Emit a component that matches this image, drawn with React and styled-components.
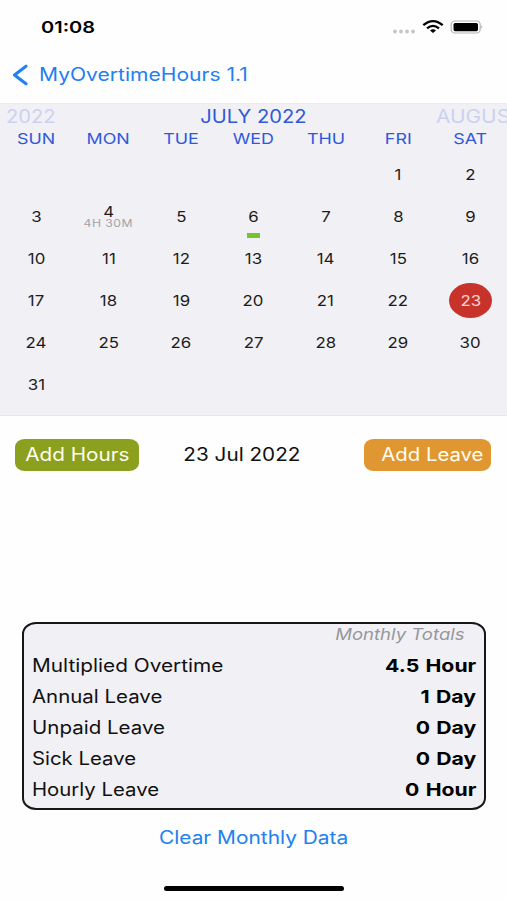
import styled, { createGlobalStyle } from "styled-components";

const GlobalStyle = createGlobalStyle`
  * {
    box-sizing: border-box;
  }
  body {
    margin: 0;
    background: #fefefe;
    font-family: Inter, "Liberation Sans", sans-serif;
    color: #111;
  }
  button {
    border: none;
    background: none;
    padding: 0;
    font-family: inherit;
  }
`;

const Screen = styled.div`
  width: 507px;
  height: 900px;
  display: flex;
  flex-direction: column;
  overflow: hidden;
`;

// extended lettering
const Wide = styled.span`
  display: inline-block;
  white-space: nowrap;
  transform: scaleX(${(props) => props.$stretch || 1.16});
  transform-origin: ${(props) => props.$origin || "center"};
`;

const StatusBar = styled.header`
  height: 54px;
  padding: 0 24px 0 41px;
  display: flex;
  align-items: center;
  justify-content: space-between;
`;

const Clock = styled.div`
  font-size: 16px;
  font-weight: 600;
  color: #000;
`;

const NavBar = styled.nav`
  height: 49px;
  padding: 0 0 8px 12px;
  display: flex;
  align-items: center;
`;

const BackButton = styled.button`
  display: flex;
  align-items: center;
  gap: 11px;
  font-size: 18px;
  line-height: 22px;
  color: #1f80f2;
`;

const Calendar = styled.section`
  height: 313px;
  background: #f1f0f5;
  border-top: 1px solid #ebeaef;
  border-bottom: 1px solid #e6e5ea;
`;

const Months = styled.div`
  height: 24px;
  display: grid;
  grid-template-columns: 130px 1fr 130px;
  align-items: center;
  font-size: 18px;
  color: #3059d8;
`;

const Month = styled.div`
  padding-left: ${(props) => props.$indent || 0}px;
  text-align: ${(props) => props.$align || "left"};
  color: ${(props) => (props.$faded ? "#cbd2f0" : "inherit")};
`;

const Week = styled.div`
  display: grid;
  grid-template-columns: repeat(7, 72.4px);
`;

const Weekday = styled.div`
  height: 22px;
  line-height: 22px;
  text-align: center;
  font-size: 15px;
  font-weight: 400;
  color: #2f59da;
`;

const Days = styled(Week)`
  padding-top: 3.4px;
  grid-auto-rows: 42.1px;
`;

const Day = styled.div`
  position: relative;
  display: flex;
  flex-direction: column;
  align-items: center;
  justify-content: center;
  font-size: 14.5px;
  line-height: 15px;
  font-weight: 400;
  color: ${(props) => (props.$selected ? "#fbd5d0" : "#1c1c20")};
`;

const DayCircle = styled.div`
  width: 43px;
  height: 35px;
  border-radius: 50%;
  background: #c7332b;
  display: flex;
  align-items: center;
  justify-content: center;
`;

const DayNote = styled.div`
  font-size: 10.5px;
  line-height: 10px;
  letter-spacing: 0.4px;
  color: #a3a3a8;
`;

const EventMark = styled.i`
  position: absolute;
  bottom: 0;
  width: 13px;
  height: 5px;
  background: #78c22c;
`;

const Actions = styled.div`
  height: 77px;
  padding: 0 16px 0 15px;
  display: grid;
  grid-template-columns: 124px 1fr 127px;
  align-items: center;
`;

const ActionButton = styled.button`
  height: 32px;
  border-radius: 10px / 8px;
  background: ${(props) => props.$color};
  color: #fffdf0;
  font-size: 18px;
  text-align: ${(props) => props.$align};
  padding-right: ${(props) => (props.$align === "right" ? 7.5 : 0)}px;
`;

const SelectedDate = styled.div`
  padding-right: 19px;
  text-align: center;
  font-size: 18px;
`;

const Totals = styled.section`
  width: 464px;
  height: 187.5px;
  margin: 129px 0 0 22px;
  padding: 0 8px;
  border: 2px solid #17171a;
  border-radius: 14px / 12px;
  background: #f1f0f5;
`;

const TotalsTitle = styled.h2`
  margin: 0;
  height: 26px;
  padding-right: 11px;
  text-align: right;
  font-size: 16px;
  line-height: 20px;
  font-weight: 400;
  font-style: italic;
  color: #97979c;
`;

const TotalsRow = styled.div`
  height: 31px;
  display: flex;
  justify-content: space-between;
  align-items: center;
  font-size: 18px;
`;

const Amount = styled.strong`
  font-weight: 700;
  word-spacing: 1px;
  color: #000;
`;

const ClearButton = styled.button`
  height: 24px;
  margin-top: 16.5px;
  font-size: 18px;
  line-height: 22px;
  color: #2280f0;
`;

const HomeIndicator = styled.div`
  width: 180px;
  height: 5px;
  margin: 36px 0 0 164px;
  border-radius: 3px;
  background: #000;
`;

const weekdays = ["SUN", "MON", "TUE", "WED", "THU", "FRI", "SAT"];
const leadingBlanks = 5;
const notes = { 4: "4H 30M" };
const marks = [6];
const selected = 23;

const totals = [
  { label: "Multiplied Overtime", amount: "4.5 Hour", stretch: 1.155 },
  { label: "Annual Leave", amount: "1 Day", stretch: 1.135 },
  { label: "Unpaid Leave", amount: "0 Day", stretch: 1.14 },
  { label: "Sick Leave", amount: "0 Day", stretch: 1.13 },
  { label: "Hourly Leave", amount: "0 Hour", stretch: 1.13 },
];

const StatusIcons = () => (
  <svg width="92" height="20" viewBox="0 0 92 20">
    <g fill="#c6c6c6">
      <circle cx="4" cy="14.5" r="1.9" />
      <circle cx="10" cy="14.5" r="1.9" />
      <circle cx="16" cy="14.5" r="1.9" />
      <circle cx="22" cy="14.5" r="1.9" />
    </g>
    <g fill="none" stroke="#000" strokeWidth="2.3">
      <path d="M32.3 8.2 Q42 0 51.7 8.2" />
      <path d="M36 11.4 Q42 6.4 48 11.4" />
    </g>
    <path d="M39 13.5 Q42 11.2 45 13.5 L42 16 Z" fill="#000" />
    <rect x="60.2" y="4" width="29" height="12" rx="3.6" fill="#fff" stroke="#b4b4b4" strokeWidth="1.2" />
    <rect x="62.5" y="6" width="24.5" height="8.2" rx="1.6" fill="#000" />
    <path d="M90.6 8 Q92 10 90.6 12 Z" fill="#777" />
  </svg>
);

const CalendarDay = ({ day }) => (
  <Day $selected={day === selected}>
    {day === selected ? (
      <DayCircle>
        <Wide>{day}</Wide>
      </DayCircle>
    ) : (
      <Wide>{day}</Wide>
    )}
    {notes[day] && (
      <DayNote>
        <Wide>{notes[day]}</Wide>
      </DayNote>
    )}
    {marks.includes(day) && <EventMark />}
  </Day>
);

const App = () => {
  return (
    <Screen>
      <GlobalStyle />
      <StatusBar>
        <Clock>
          <Wide $origin="left" $stretch={1.25}>
            01:08
          </Wide>
        </Clock>
        <StatusIcons />
      </StatusBar>
      <NavBar>
        <BackButton>
          <svg width="16" height="22" viewBox="0 0 16 22">
            <path d="M14 2.2 L2.5 11 L14 19.8" fill="none" stroke="#1f80f2" strokeWidth="3" strokeLinecap="round" strokeLinejoin="round" />
          </svg>
          <Wide $origin="left" $stretch={1.17}>
            MyOvertimeHours 1.1
          </Wide>
        </BackButton>
      </NavBar>

      <Calendar>
        <Months>
          <Month $faded $indent={6}>
            <Wide $origin="left" $stretch={1.12}>
              2022
            </Wide>
          </Month>
          <Month $align="center">
            <Wide $stretch={1.12}>JULY 2022</Wide>
          </Month>
          <Month $faded $indent={59}>
            <Wide $origin="left">AUGUST 2022</Wide>
          </Month>
        </Months>
        <Week>
          {weekdays.map((name) => (
            <Weekday key={name}>
              <Wide $stretch={1.19}>{name}</Wide>
            </Weekday>
          ))}
        </Week>
        <Days>
          {Array.from({ length: leadingBlanks }, (_, index) => (
            <span key={`blank-${index}`} />
          ))}
          {Array.from({ length: 31 }, (_, index) => (
            <CalendarDay key={index + 1} day={index + 1} />
          ))}
        </Days>
      </Calendar>

      <Actions>
        <ActionButton $color="#8ba01f" $align="center">
          <Wide $stretch={1.15}>Add Hours</Wide>
        </ActionButton>
        <SelectedDate>
          <Wide $stretch={1.15}>23 Jul 2022</Wide>
        </SelectedDate>
        <ActionButton $color="#e09731" $align="right">
          <Wide $origin="right" $stretch={1.13}>
            Add Leave
          </Wide>
        </ActionButton>
      </Actions>

      <Totals>
        <TotalsTitle>
          <Wide $origin="right">Monthly Totals</Wide>
        </TotalsTitle>
        {totals.map((item) => (
          <TotalsRow key={item.label}>
            <Wide $origin="left" $stretch={item.stretch}>
              {item.label}
            </Wide>
            <Amount>
              <Wide $origin="right" $stretch={1.18}>
                {item.amount}
              </Wide>
            </Amount>
          </TotalsRow>
        ))}
      </Totals>

      <ClearButton>
        <Wide>Clear Monthly Data</Wide>
      </ClearButton>
      <HomeIndicator />
    </Screen>
  );
};

export default App;
